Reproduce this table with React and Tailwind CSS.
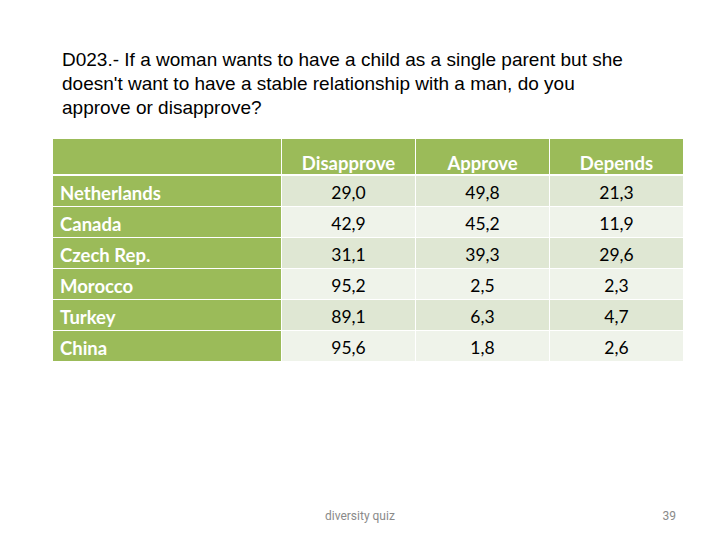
import React from "react";

const rows = [
  ["Netherlands", "29,0", "49,8", "21,3"],
  ["Canada", "42,9", "45,2", "11,9"],
  ["Czech Rep.", "31,1", "39,3", "29,6"],
  ["Morocco", "95,2", "2,5", "2,3"],
  ["Turkey", "89,1", "6,3", "4,7"],
  ["China", "95,6", "1,8", "2,6"],
];

const App = () => {
  return (
    <div className="w-[720px] h-[540px] bg-white flex flex-col">
      {/* Question */}
      <div className="pl-[62px] pt-[48px] text-[19px] leading-[24px] text-black font-['Liberation_Sans',Arial,sans-serif]">
        D023.- If a woman wants to have a child as a single parent but she
        <br />
        doesn't want to have a stable relationship with a man, do you
        <br />
        approve or disapprove?
      </div>

      {/* Table */}
      <div className="ml-[53px] mt-[19px] w-[631px] font-['Lato',sans-serif] text-[17.5px]">
        <div className="grid grid-cols-[228px_133px_133px_133px] gap-x-px">
          <div className="h-[35px] bg-[#9bbb59]" />
          {["Disapprove", "Approve", "Depends"].map((h) => (
            <div
              key={h}
              className="h-[35px] bg-[#9bbb59] flex items-end justify-center text-[18.5px] leading-[22px] text-white font-bold"
            >
              {h}
            </div>
          ))}
        </div>
        <div className="mt-[2px] grid grid-cols-[228px_133px_133px_133px] gap-px">
          {rows.map((r, i) => (
            <React.Fragment key={r[0]}>
              <div className="h-[30px] bg-[#9bbb59] flex items-center pl-[7px] pt-[5px] text-[18.5px] text-white font-bold">
                {r[0]}
              </div>
              {r.slice(1).map((v, j) => (
                <div
                  key={j}
                  className={`h-[30px] flex items-center justify-center pt-[4px] text-black ${
                    i % 2 === 0 ? "bg-[#dfe7d3]" : "bg-[#eff3ea]"
                  }`}
                >
                  {v}
                </div>
              ))}
            </React.Fragment>
          ))}
        </div>
      </div>

      {/* Footer */}
      <div className="mt-auto mb-[15px] flex items-center text-[12px] text-[#8a8a8a] font-['Roboto',sans-serif]">
        <div className="ml-[325px]">diversity quiz</div>
        <div className="ml-auto mr-[44px]">39</div>
      </div>
    </div>
  );
};

export default App;
